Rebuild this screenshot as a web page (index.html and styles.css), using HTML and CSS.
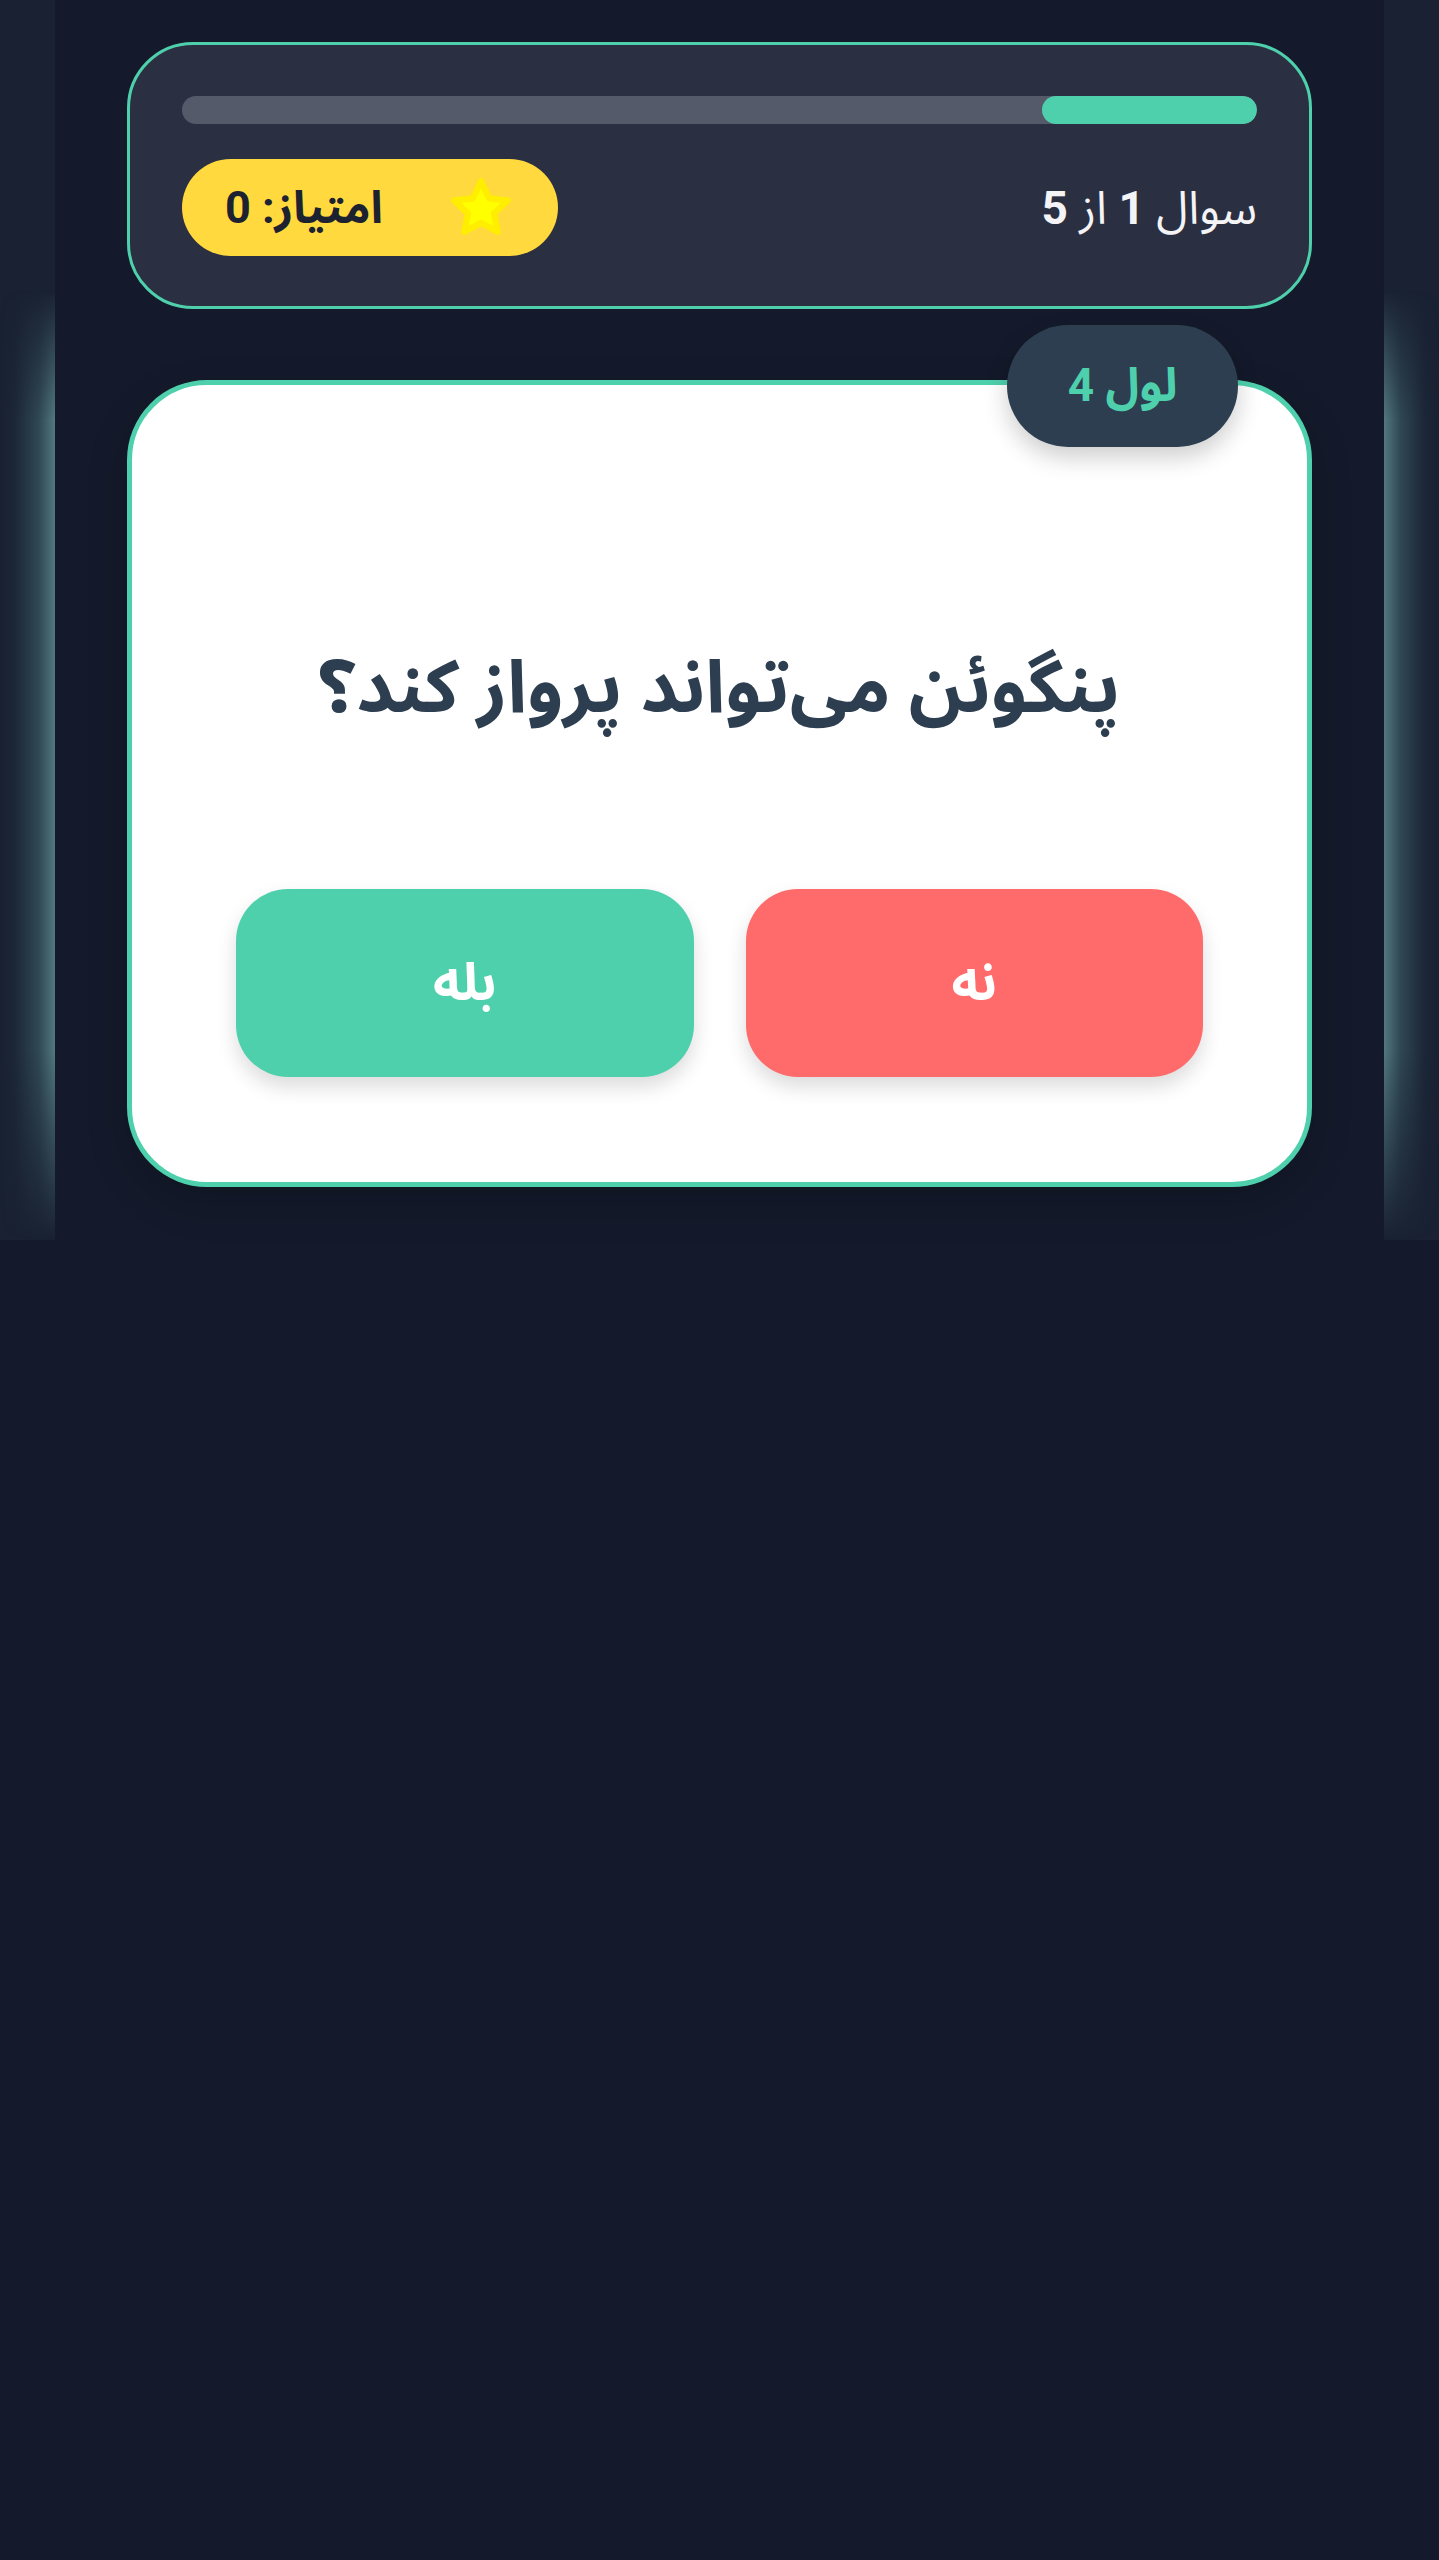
FILE: index.html
```html
<!DOCTYPE html>
<html lang="fa" dir="rtl">
<head>
<meta charset="utf-8">
<title>کوییز</title>
<link rel="stylesheet" href="styles.css">
</head>
<body>
<div class="page">
  <div class="side side-right"><div class="glow"></div></div>
  <main class="main">
    <section class="top-card">
      <div class="progress"><div class="progress-fill" style="width: 20%"></div></div>
      <div class="stats">
        <div class="counter">سوال <b>1</b> از <b>5</b></div>
        <div class="score">
          <svg class="star" viewBox="0 0 24 24" aria-hidden="true"><polygon points="12,2.6 14.9,8.6 21.4,9.4 16.6,13.9 17.9,20.4 12,17.2 6.1,20.4 7.4,13.9 2.6,9.4 9.1,8.6" fill="#ffff00" stroke="#ffee00" stroke-width="2.2" stroke-linejoin="round"/></svg>
          <span class="score-text">امتیاز: 0</span>
        </div>
      </div>
    </section>
    <section class="quiz-card">
      <div class="badge">لول 4</div>
      <h1 class="question">پنگوئن می‌تواند پرواز کند؟</h1>
      <div class="answers">
        <button class="answer answer-no">نه</button>
        <button class="answer answer-yes">بله</button>
      </div>
    </section>
  </main>
  <div class="side side-left"><div class="glow"></div></div>
</div>
</body>
</html>
```

FILE: styles.css
```css
* { box-sizing: border-box; }

html, body {
  margin: 0;
  padding: 0;
  background: #141a2b;
}

body {
  font-family: Roboto, "Noto Sans Arabic", "DejaVu Sans", sans-serif;
  color: #ffffff;
}

.page {
  display: flex;
  flex-direction: row;
  align-items: flex-start;
  min-height: 2560px;
}

.side {
  width: 55px;
  flex: 0 0 55px;
  height: 1240px;
  background: #192132;
  padding-top: 290px;
}

.glow {
  height: 950px;
  -webkit-mask-image: linear-gradient(to bottom, transparent 0, #000 130px, #000 760px, transparent 950px);
  mask-image: linear-gradient(to bottom, transparent 0, #000 130px, #000 760px, transparent 950px);
}

.side-left .glow {
  background: linear-gradient(to left, rgba(92, 136, 140, 0.85) 0, rgba(72, 112, 120, 0.5) 16px, rgba(44, 66, 78, 0.18) 40px, rgba(30, 40, 55, 0) 55px);
}

.side-right .glow {
  background: linear-gradient(to right, rgba(92, 136, 140, 0.85) 0, rgba(72, 112, 120, 0.5) 16px, rgba(44, 66, 78, 0.18) 40px, rgba(30, 40, 55, 0) 55px);
}

.main {
  flex: 1 1 auto;
  padding: 42px 72px 0;
}

.top-card {
  background: #2b2f42;
  border: 3px solid #4fd0ad;
  border-radius: 66px;
  padding: 51px 52px 50px;
}

.progress {
  height: 28px;
  background: #555a6a;
  border-radius: 14px;
  overflow: hidden;
}

.progress-fill {
  height: 100%;
  background: #4fd0ad;
  border-radius: 14px;
}

.stats {
  margin-top: 35px;
  display: flex;
  justify-content: space-between;
  align-items: center;
}

.counter {
  font-size: 46px;
  color: #f4f4f6;
  line-height: 1;
}

.counter b { font-weight: 700; }

.score {
  height: 97px;
  background: #ffd93d;
  border-radius: 49px;
  padding: 0 43px;
  display: flex;
  align-items: center;
  gap: 64px;
}

.star {
  width: 68px;
  height: 68px;
  display: block;
}

.score-text {
  font-size: 45px;
  font-weight: 700;
  color: #1d2230;
  line-height: 1;
}

.quiz-card {
  position: relative;
  margin-top: 71px;
  background: #ffffff;
  border: 5px solid #4fd0ad;
  border-radius: 80px;
  padding: 104px 104px 105px;
  box-shadow: 0 16px 40px rgba(0, 0, 0, 0.18);
}

.badge {
  position: absolute;
  top: -60px;
  right: 69px;
  width: 231px;
  height: 122px;
  border-radius: 61px;
  background: #2c3e50;
  color: #4fd0ad;
  font-size: 46px;
  font-weight: 700;
  display: flex;
  align-items: center;
  justify-content: center;
  box-shadow: 0 10px 24px rgba(0, 0, 0, 0.2);
}

.question {
  margin: 0;
  height: 400px;
  display: flex;
  align-items: center;
  justify-content: center;
  font-size: 73px;
  font-weight: 700;
  color: #2c3e50;
  text-align: center;
}

.answers {
  display: grid;
  grid-template-columns: 1fr 1fr;
  gap: 52px;
}

.answer {
  height: 188px;
  border: none;
  border-radius: 52px;
  font-family: inherit;
  font-size: 52px;
  font-weight: 700;
  color: #ffffff;
  box-shadow: 0 10px 20px rgba(0, 0, 0, 0.14);
  cursor: pointer;
}

.answer-no { background: #ff6b6b; }
.answer-yes { background: #4fd0ad; }
```
